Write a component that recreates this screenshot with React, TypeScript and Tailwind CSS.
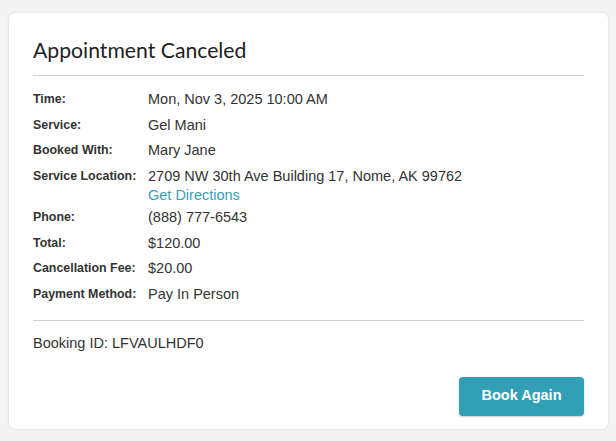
const details: { label: string; value: string; link?: string }[] = [
  { label: 'Time:', value: 'Mon, Nov 3, 2025 10:00 AM' },
  { label: 'Service:', value: 'Gel Mani' },
  { label: 'Booked With:', value: 'Mary Jane' },
  { label: 'Service Location:', value: '2709 NW 30th Ave Building 17, Nome, AK 99762', link: 'Get Directions' },
  { label: 'Phone:', value: '(888) 777-6543' },
  { label: 'Total:', value: '$120.00' },
  { label: 'Cancellation Fee:', value: '$20.00' },
  { label: 'Payment Method:', value: 'Pay In Person' },
]

export default function App() {
  return (
    <div className="min-h-[441px] bg-[#f4f4f4] pl-[9px] pr-[8px] pt-[13px] pb-[12px] font-['Liberation_Sans',Arial,sans-serif]">
      <div className="rounded-md bg-white px-6 pt-[23px] pb-[13px] shadow-[0_0_3px_rgba(0,0,0,0.12)]">
        {/* Header */}
        <h1 className="border-b border-[#cccccc] pb-[11px] font-['Lato',sans-serif] text-[21.2px] leading-7 text-[#222]">
          Appointment Canceled
        </h1>

        {/* Details */}
        <div className="mt-[13px] flex flex-col gap-[5.5px]">
          {details.map((row) => (
            <div key={row.label} className="flex">
              <div className="w-[115px] shrink-0 text-[12.4px] leading-5 font-bold text-[#333]">{row.label}</div>
              <div className="text-[14.5px] leading-5 text-[#333]">
                <div>{row.value}</div>
                {row.link && <a className="-mt-px -mb-[3px] block text-[#3aa0b8]">{row.link}</a>}
              </div>
            </div>
          ))}
        </div>

        <div className="mt-4 border-t border-[#cccccc] pt-3 text-[14.5px] leading-5 text-[#333]">
          Booking ID: LFVAULHDF0
        </div>

        <div className="mt-6 flex justify-end">
          <button className="h-[39px] w-[125px] rounded bg-[#319fb5] text-[14.5px] font-bold text-white shadow-[0_1px_2px_rgba(0,0,0,0.2)]">
            Book Again
          </button>
        </div>
      </div>
    </div>
  )
}
